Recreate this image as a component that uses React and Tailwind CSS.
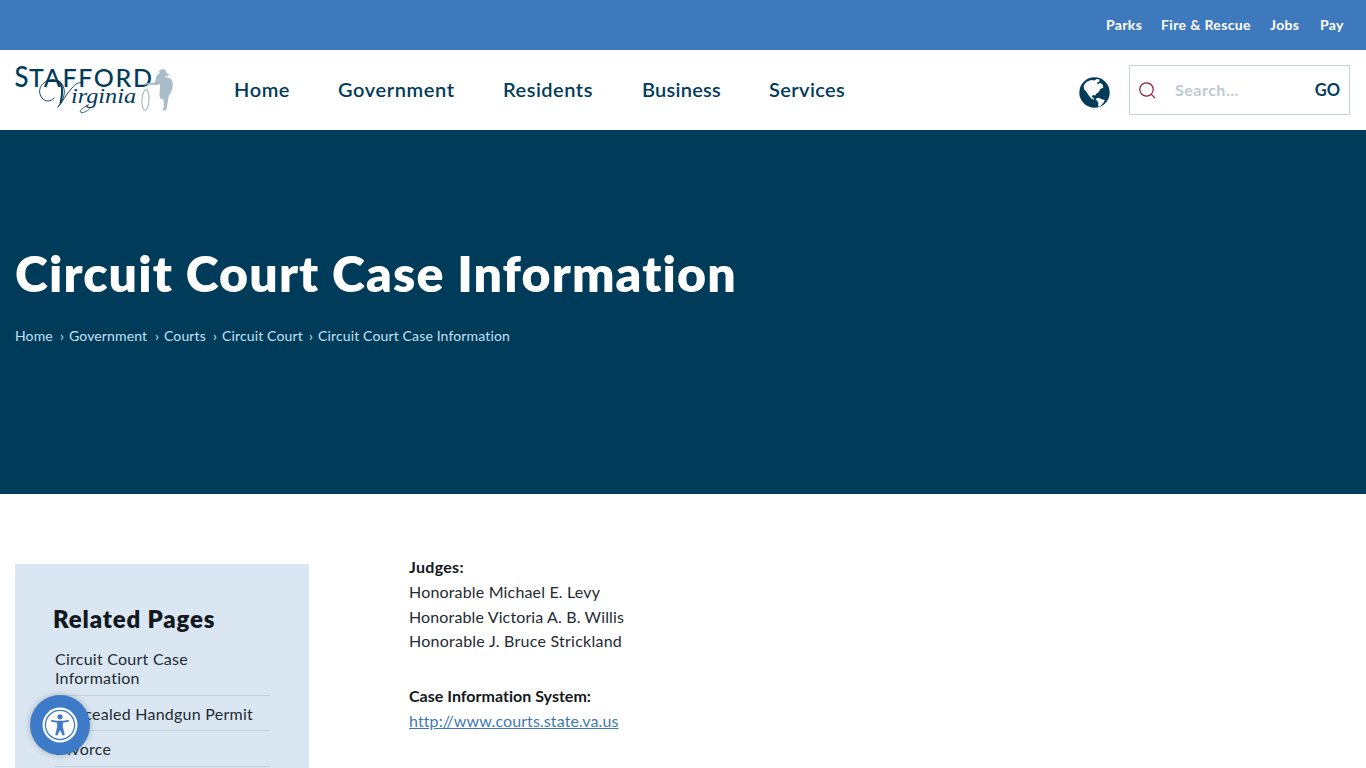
const topLinks = [
  { label: "Parks", className: "w-[36px]" },
  { label: "Fire & Rescue", className: "w-[90px]" },
  { label: "Jobs", className: "w-[31px]" },
  { label: "Pay", className: "w-[24px]" },
];

const navLinks = [
  { label: "Home", className: "w-[56px] tracking-[0.6px]" },
  { label: "Government", className: "w-[117px] tracking-[0.6px]" },
  { label: "Residents", className: "w-[91px] tracking-[0.5px]" },
  { label: "Business", className: "w-[79px] tracking-[0.25px]" },
  { label: "Services", className: "w-[77px] tracking-[0.4px]" },
];

const breadcrumbs = [
  { label: "Home", className: "w-[50px]" },
  { label: "Government", className: "w-[91px]" },
  { label: "Courts", className: "w-[54px]" },
  { label: "Circuit Court", className: "w-[92px]" },
  { label: "Circuit Court Case Information", className: "w-[195px]" },
];

const relatedPages = ["Circuit Court Case Information", "Concealed Handgun Permit", "Divorce"];

function Logo() {
  return (
    <svg width="160" height="54" viewBox="0 0 160 54" className="overflow-visible" aria-label="Stafford Virginia">
      <g fill="#003c5a" fontFamily="Lato, sans-serif" fontWeight="500">
        <text x="-0.5" y="23.800" fontSize="28" textLength="14" lengthAdjust="spacingAndGlyphs">S</text>
        <text x="14" y="23.800" fontSize="25" textLength="123" lengthAdjust="spacing">TAFFORD</text>
      </g>
      {/* swash and V of the script line */}
      <g fill="none" stroke="#003c5a" strokeLinecap="round">
        <path d="M39 35c-3 4-9 4-12 0-4-5-3-12 3-16 6-4 13-3 17 2 4 6 3 15-4 23" strokeWidth="0.9" />
        <path d="M43 18c5 3 5 11 2.500 22" strokeWidth="2" />
        <path d="M43 44c5-6 9-14 14-19 3-4 7-6 10-5.500" strokeWidth="0.9" />
      </g>
      <text
        x="56"
        y="40"
        fill="#003c5a"
        fontFamily="'Liberation Serif', serif"
        fontStyle="italic"
        fontSize="21"
        textLength="65"
        lengthAdjust="spacingAndGlyphs"
      >
        irginia
      </text>
      <path d="M76 44c-3 4-7 6-10 5.500-2-1 0-4 8-8" fill="none" stroke="#003c5a" strokeWidth="0.8" />
      {/* walking figure with a lasso */}
      <path
        d="M141 9.500c2 0 3-.5 3.700-2.500 2-1.200 4.800-1.200 5.800.3l1.200 2.700c1 1 2 1.200 3 1.200-1.500 1.500-3 2-4.500 1.500l.3 1.500c4 0 6 1.500 7 4.500.8 3-.2 7-1.200 9.500-.8 2.500-2.300 3.500-2.800 6-.7 4-1.200 8-2 12 0 1-2.500 1.500-4 1l1.200-2.500.3-5.500-1-3-2.500-.5-1-3.200.5-8.500-.3-3-3 1-7.700-.3c-2-.3-3 .3-4.500.8l-.3-1.200c1.500-1 3-1.500 5-1.300l5-.3 1.500-3c.3-3 .8-5.200 4-6.200l-.5-2.300Z"
        fill="#a9bcc8"
      />
      <ellipse cx="130.500" cy="37" rx="3.500" ry="10.300" fill="none" stroke="#a9bcc8" strokeWidth="1.200" transform="rotate(3 130.500 37)" />
    </svg>
  );
}

function Globe() {
  return (
    <svg width="31" height="31" viewBox="0 0 30 30" className="mt-1">
      <circle cx="15" cy="15" r="14.700" fill="#003c5a" />
      <path
        d="M4.500 8.500C6 5.500 9 3.500 12 3l3 .5 2-1.500 3 .5-.5 2L17 5.500l1.500 1.500 2-1.500 2.500 2 .5 3-3 1.200-1.200 2.800-3 2-.3 1.500-2.500-.5-1.200 1.500 1.500 1.200 1 2-3-1.500L9 17.200 7 14l-2-2Z"
        fill="#fff"
      />
      <path d="M16 21l3-1 3 1.500 3 .8-1.300 2.700-3.200 3.200-2 .3.200-3.500Z" fill="#fff" />
    </svg>
  );
}

function SearchBox() {
  return (
    <form className="flex h-[50px] w-[221px] items-center border border-[#c8d3de] pl-[9px] pr-[9px]">
      <svg width="17" height="17" viewBox="0 0 17 17" fill="none" stroke="#8e1f3e" strokeWidth="1.2">
        <circle cx="7.500" cy="7.500" r="6.700" />
        <path d="M12.300 12.300 16 16" />
      </svg>
      <input
        type="text"
        placeholder="Search..."
        className="ml-[19px] w-[130px] text-[16px] font-bold tracking-[0.5px] outline-none placeholder:text-[#bfc9d3]"
      />
      <button type="button" className="ml-auto text-[16.5px] font-bold text-[#003c5a]">
        GO
      </button>
    </form>
  );
}

function AccessibilityButton() {
  return (
    <button
      type="button"
      aria-label="Accessibility menu"
      className="fixed bottom-[13px] left-[30px] flex size-[60px] items-center justify-center rounded-full bg-[#3d7ac8] shadow-[0_0_6px_rgba(0,0,0,0.25)]"
    >
      <svg width="36" height="36" viewBox="0 0 36 36">
        <circle cx="18" cy="18" r="17.500" fill="#fff" />
        <circle cx="18" cy="18" r="14.600" fill="none" stroke="#3d7ac8" strokeWidth="1.300" />
        <circle cx="18" cy="9.800" r="2.600" fill="#3d7ac8" />
        <path
          d="M10 13.800c5 1.400 11 1.400 16 0"
          fill="none"
          stroke="#3d7ac8"
          strokeWidth="1.900"
          strokeLinecap="round"
        />
        <path
          d="M15.300 14h5.400v6.500l1.800 7.200-1.800.6L18 22.500l-2.700 5.800-1.800-.6 1.800-7.200Z"
          fill="#3d7ac8"
          stroke="#3d7ac8"
          strokeWidth="0.500"
        />
      </svg>
    </button>
  );
}

export default function App() {
  return (
    <div className="h-screen overflow-hidden bg-white font-['Lato',sans-serif] text-[#111820]">
      <div className="flex h-[50px] items-center justify-end gap-[19px] bg-[#3f79bd] pb-[2px] pr-[22px] text-[14px] font-bold tracking-[0.36px] text-white">
        {topLinks.map((link) => (
          <a key={link.label} href="#" className={`whitespace-nowrap ${link.className}`}>
            {link.label}
          </a>
        ))}
      </div>

      <header className="flex h-[80px] items-center pl-[15px] pr-4">
        <a href="#" className="block w-[219px]">
          <Logo />
        </a>
        <nav className="flex gap-12 pb-[2px] text-[20px] font-semibold text-[#003c5a]">
          {navLinks.map((link) => (
            <a key={link.label} href="#" className={`whitespace-nowrap ${link.className}`}>
              {link.label}
            </a>
          ))}
        </nav>
        <div className="ml-auto flex items-center gap-[19px]">
          <Globe />
          <SearchBox />
        </div>
      </header>

      <section className="h-[364px] bg-[#003c5a] pl-[15px] pt-[113px]">
        <h1 className="whitespace-nowrap text-[50px] font-extrabold leading-[60px] tracking-[1.13px] text-white">
          Circuit Court Case Information
        </h1>
        <div className="mt-[23px] flex gap-[5px] text-[14px] leading-5 tracking-[0.14px] text-[#c3e0f5]">
          {breadcrumbs.map((crumb, index) => (
            <div key={crumb.label} className={`-mr-px flex justify-between whitespace-nowrap pr-px ${crumb.className}`}>
              <a href="#">{crumb.label}</a>
              {index < breadcrumbs.length - 1 && <span>›</span>}
            </div>
          ))}
        </div>
      </section>

      <main className="flex items-start gap-[100px] pl-[15px]">
        <aside className="mt-[70px] w-[294px] bg-[#dae7f2] pb-10 pl-[38px] pr-[39px] pt-[37px]">
          <h2 className="text-[24px] font-extrabold leading-9 tracking-[0.85px]">Related Pages</h2>
          <ul className="ml-[2px] mt-[4px] text-[16px] leading-[19px] tracking-[0.25px] text-[#232a31]">
            {relatedPages.map((page) => (
              <li key={page} className="border-b border-[#c2d0de] pb-[7.500px] pt-[8px]">
                <a href="#">{page}</a>
              </li>
            ))}
          </ul>
        </aside>
        <article className="mt-[61px] text-[16px] leading-[24.8px] tracking-[0.17px] text-[#232a31]">
          <p className="font-bold tracking-[0.3px] text-[#111820]">Judges:</p>
          <p>Honorable Michael E. Levy</p>
          <p className="tracking-[0.13px]">Honorable Victoria A. B. Willis</p>
          <p className="tracking-[0.24px]">Honorable J. Bruce Strickland</p>
          <p className="mt-[30px] font-bold tracking-[0.02px] text-[#111820]">Case Information System:</p>
          <a href="#" className="tracking-[0.1px] text-[#3f79b5] underline">
            http://www.courts.state.va.us
          </a>
        </article>
      </main>

      <AccessibilityButton />
    </div>
  );
}
